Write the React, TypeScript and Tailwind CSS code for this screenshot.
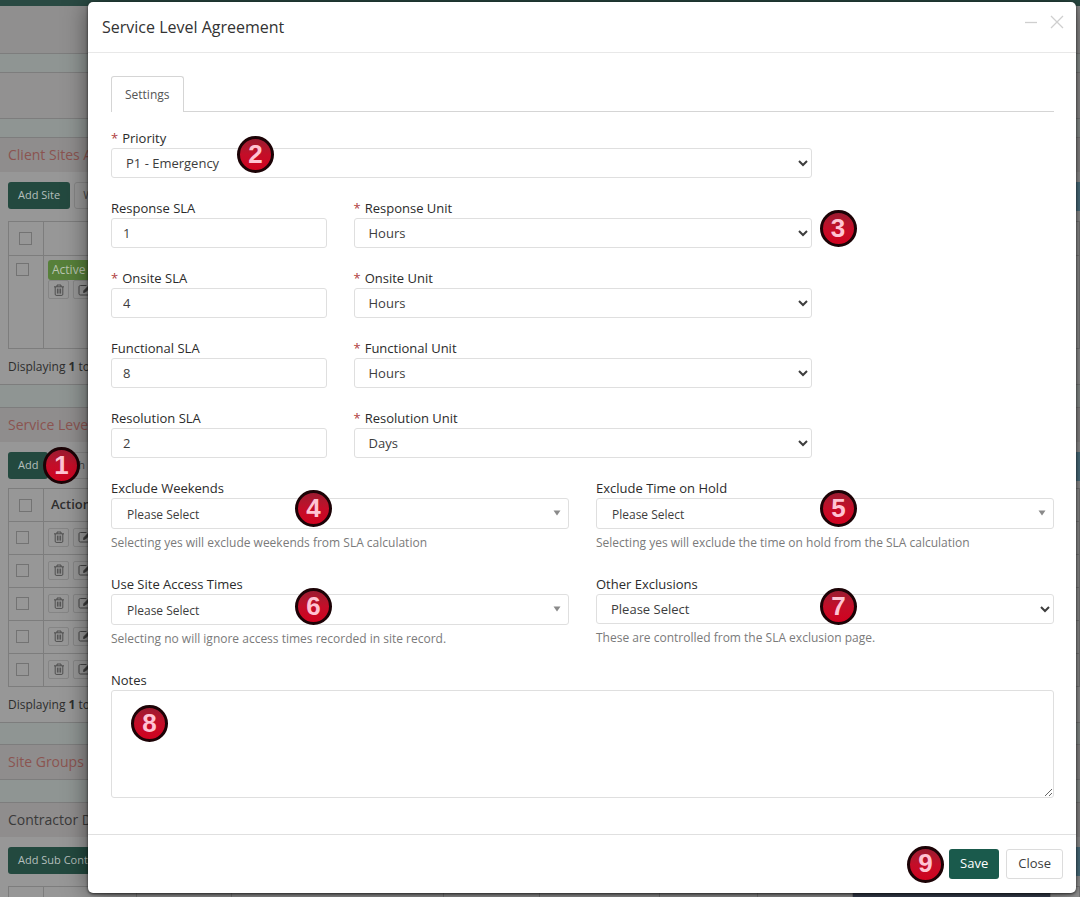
import type { ReactNode } from "react";
import clsx from "clsx";

const slaRows = [
  { name: "Response", value: "1", unit: "Hours", required: false, marker: 3 },
  { name: "Onsite", value: "4", unit: "Hours", required: true },
  { name: "Functional", value: "8", unit: "Hours", required: false },
  { name: "Resolution", value: "2", unit: "Days", required: false },
];

const control = "block w-full rounded-[3px] border border-[#dfdfdf] bg-white text-[#3d3d3d]";

function Marker({ n, className }: { n: number; className?: string }) {
  return (
    <span
      className={clsx(
        "flex h-[37px] w-[37px] items-center justify-center rounded-full border-[3px] border-[#1c0306] bg-gradient-to-b from-[#9c1a30] via-[#c40d28] to-[#d0021f] pb-0.5 font-['Liberation_Sans',sans-serif] text-[26px] leading-none font-bold text-[#ffc4d3]",
        className
      )}
    >
      {n}
    </span>
  );
}

function Label({
  htmlFor,
  required,
  children,
}: {
  htmlFor: string;
  required?: boolean;
  children: ReactNode;
}) {
  return (
    <label htmlFor={htmlFor} className="block h-5 text-[13px] leading-5 text-[#2b2b2b]">
      {required && <span className="mr-1 text-[#b0413e]">*</span>}
      {children}
    </label>
  );
}

function Select({ id, value }: { id: string; value: string }) {
  return (
    <select
      id={id}
      defaultValue={value}
      className={clsx(control, "h-[30px] pr-2 pl-2.5 text-[13px]")}
    >
      <option>{value}</option>
    </select>
  );
}

function SearchSelect({ id }: { id: string }) {
  return (
    <div className="relative">
      <select
        id={id}
        defaultValue="Please Select"
        className={clsx(control, "h-[31px] appearance-none px-[15px] pt-0.5 text-xs")}
      >
        <option>Please Select</option>
        <option>Yes</option>
        <option>No</option>
      </select>
      <svg
        viewBox="0 0 8 6"
        className="pointer-events-none absolute top-3 right-2 h-1.5 w-2 text-[#8a8a8a]"
        fill="currentColor"
      >
        <path d="M0.5 0.5h7L4 5.5z" />
      </svg>
    </div>
  );
}

function Hint({ children }: { children: ReactNode }) {
  return <p className="mt-1 text-xs leading-5 text-[#7a7a7a]">{children}</p>;
}

/* ---------- page behind the dialog ---------- */

function TrashIcon() {
  return (
    <svg
      viewBox="0 0 12 12"
      className="h-3 w-3 text-[#3c3c3c]"
      fill="none"
      stroke="currentColor"
      strokeWidth="0.8"
    >
      <path d="M1 2.8h10M4 2.6V1h4v1.6M2.2 3v7.2c0 .8.4 1.2 1 1.2h5.6c.6 0 1-.4 1-1.2V3M4.4 4.6v5M6 4.6v5M7.6 4.6v5" />
    </svg>
  );
}

function EditIcon() {
  return (
    <svg
      viewBox="0 0 14 12"
      className="h-3 w-3.5 shrink-0 text-[#3c3c3c]"
      fill="none"
      stroke="currentColor"
      strokeWidth="0.9"
    >
      <path d="M8.5 1.5H2.5c-1 0-1.5.5-1.5 1.5v6.5c0 1 .5 1.5 1.5 1.5h7c1 0 1.5-.5 1.5-1.5V7.5" />
      <path d="M5.5 8.5l.5-2L11.5 1l1.5 1.500L7.500 8z" fill="currentColor" />
    </svg>
  );
}

function RowActions() {
  return (
    <div className="flex gap-1">
      <button
        aria-label="Delete"
        className="flex h-[19px] w-[21px] items-center justify-center rounded-xs border border-[#858585]"
      >
        <TrashIcon />
      </button>
      <button
        aria-label="Edit"
        className="flex h-[19px] w-6 items-center justify-center rounded-xs border border-[#858585]"
      >
        <EditIcon />
      </button>
    </div>
  );
}

function Check({ label }: { label: string }) {
  return (
    <input
      type="checkbox"
      aria-label={label}
      className="block h-[13px] w-[13px] appearance-none border border-[#737373]"
    />
  );
}

function PanelTitle({ muted, children }: { muted?: boolean; children: ReactNode }) {
  return (
    <h2
      className={clsx(
        "h-[35px] border-t border-[#7d7d7d] bg-[#8f8d8d] px-2 text-sm leading-[34px]",
        muted ? "text-[#3a3a3a]" : "text-[#8b5450]"
      )}
    >
      {children}
    </h2>
  );
}

function Toolbar({ action, other }: { action: string; other?: string }) {
  return (
    <div className="flex h-[39px] items-start gap-1 pt-2.5 pl-2">
      <button className="h-[27px] rounded-[3px] bg-[#23493f] px-2.5 text-[11px] text-[#b4bfbc]">
        {action}
      </button>
      {other && (
        <button className="h-[27px] rounded-[3px] border border-[#858585] px-2 text-[11px] text-[#444]">
          {other}
        </button>
      )}
      <span className="ml-auto h-[29px] w-10 bg-[#4f7686]" />
    </div>
  );
}

function Displaying() {
  return (
    <p className="h-9 border-b border-[#7d7d7d] px-2 text-xs leading-9 text-[#2e2e2e]">
      Displaying <b>1</b> to
    </p>
  );
}

const cell = "border border-[#7d7d7d]";
const band = "bg-[#8f9593]";

function BackgroundPage() {
  return (
    <div className="bg-[#979797]">
      <div className="h-1.5 bg-[#2a4a43]" />
      <div className="h-12 border-b border-[#7d7d7d] bg-[#908f8f]" />
      <div className={clsx(band, "h-[19px] border-b border-[#7d7d7d]")} />
      <div className="h-[46px] border-b border-[#7d7d7d] bg-[#929191]" />
      <div className={clsx(band, "h-[18px]")} />

      <section>
        <PanelTitle>Client Sites A</PanelTitle>
        <Toolbar action="Add Site" other="With" />
        <div className="pt-2.5 pl-2">
          <table className="w-full table-fixed border-collapse">
            <tbody>
              <tr className="h-[34px]">
                <td className={clsx(cell, "w-[35px] pl-2.5")}>
                  <Check label="Select all sites" />
                </td>
                <td className={cell} />
              </tr>
              <tr className="h-[93px] align-top">
                <td className={clsx(cell, "pt-[7px] pl-[7px]")}>
                  <Check label="Select site" />
                </td>
                <td className={clsx(cell, "pt-1 pl-1")}>
                  <span className="block h-5 w-16 rounded-[3px] bg-[#57803a] px-1 text-xs leading-5 text-[#b9c4b0]">
                    Active
                  </span>
                  <RowActions />
                </td>
              </tr>
            </tbody>
          </table>
        </div>
        <Displaying />
      </section>

      <div className={clsx(band, "h-[22px]")} />

      <section>
        <PanelTitle>Service Level</PanelTitle>
        <div className="relative">
          <Toolbar action="Add" other="With" />
          <Marker n={1} className="absolute top-[5px] left-[43px]" />
        </div>
        <div className="pt-[7px] pl-2">
          <table className="w-full table-fixed border-collapse">
            <thead>
              <tr className="h-[33px]">
                <th className={clsx(cell, "w-[35px] pl-2.5")}>
                  <Check label="Select all agreements" />
                </th>
                <th className={clsx(cell, "pl-[7px] text-left text-[13px] font-semibold text-[#2e2e2e]")}>
                  Action
                </th>
              </tr>
            </thead>
            <tbody>
              {[1, 2, 3, 4, 5].map((row) => (
                <tr key={row} className="h-[33px]">
                  <td className={clsx(cell, "pb-0.5 pl-[7px]")}>
                    <Check label={`Select agreement ${row}`} />
                  </td>
                  <td className={clsx(cell, "pb-0.5 pl-1")}>
                    <RowActions />
                  </td>
                </tr>
              ))}
            </tbody>
          </table>
        </div>
        <Displaying />
      </section>

      <div className={clsx(band, "h-[21px]")} />
      <PanelTitle>Site Groups</PanelTitle>
      <div className={clsx(band, "h-[23px] border-t border-[#7d7d7d]")} />

      <section>
        <PanelTitle muted>Contractor D</PanelTitle>
        <Toolbar action="Add Sub Contr" />
        <div className="pt-2.5 pl-2">
          <table className="w-full table-fixed border-collapse">
            <tbody>
              <tr className="h-[34px]">
                <td className={clsx(cell, "w-[35px] pl-2.5")}>
                  <Check label="Select all contractors" />
                </td>
                <td className={clsx(cell, "w-[93px]")} />
                <td className={clsx(cell, "w-[95px]")} />
                <td className={clsx(cell, "w-[212px]")} />
                <td className={clsx(cell, "w-24")} />
                <td className={clsx(cell, "w-[120px]")} />
                <td className={clsx(cell, "w-[98px]")} />
                <td className={clsx(cell, "w-[95px]")} />
                <td className={clsx(cell, "w-[198px] bg-[#3a4252]")} />
                <td className={cell} />
              </tr>
            </tbody>
          </table>
        </div>
      </section>
    </div>
  );
}

/* ---------- dialog ---------- */

export default function App() {
  return (
    <div className="relative h-screen overflow-hidden font-['Open_Sans',sans-serif]">
      <BackgroundPage />

      <div className="absolute inset-0 pt-0.5 pr-1 pl-[88px]">
        <div
          role="dialog"
          aria-labelledby="dialog-title"
          className="rounded-[5px] bg-white shadow-[0_1px_24px_rgba(0,0,0,0.5),0_1px_3px_rgba(0,0,0,0.7)]"
        >
          <header className="flex h-[51px] items-start justify-between border-b border-[#e8e8e8] pr-3 pl-3.5">
            <h1 id="dialog-title" className="text-base leading-[50px] text-[#333]">
              Service Level Agreement
            </h1>
            <div className="flex gap-3 pt-[13px] text-[#cfcfcf]">
              <button aria-label="Minimize">
                <svg viewBox="0 0 14 14" className="h-3.5 w-3.5" stroke="currentColor" fill="none">
                  <path d="M1 7.500h12" strokeWidth="1.3" />
                </svg>
              </button>
              <button aria-label="Close dialog">
                <svg viewBox="0 0 14 14" className="h-3.5 w-3.5" stroke="currentColor" fill="none">
                  <path d="M1 1l12 12M13 1L1 13" strokeWidth="1.3" />
                </svg>
              </button>
            </div>
          </header>

          <form className="pt-[23px] pr-[22px] pb-9 pl-[23px]">
            <div className="flex border-b border-[#d5d5d5]">
              <button
                type="button"
                className="-mb-px h-9 rounded-t-[3px] border border-b-0 border-[#d5d5d5] bg-white px-[13px] text-xs text-[#555]"
              >
                Settings
              </button>
            </div>

            <div className="mt-4 grid grid-cols-4 gap-x-[27px] gap-y-5">
              <div className="relative col-span-3">
                <Label htmlFor="priority" required>
                  Priority
                </Label>
                <Select id="priority" value="P1 - Emergency" />
                <Marker n={2} className="absolute top-2 left-[126px]" />
              </div>

              {slaRows.map((row) => (
                <div key={row.name} className="col-span-4 grid grid-cols-4 gap-x-[27px]">
                  <div>
                    <Label htmlFor={`${row.name}-sla`} required={row.required}>
                      {row.name} SLA
                    </Label>
                    <input
                      id={`${row.name}-sla`}
                      type="text"
                      defaultValue={row.value}
                      className={clsx(control, "h-[30px] px-[11px] text-[13px]")}
                    />
                  </div>
                  <div className="relative col-span-2">
                    <Label htmlFor={`${row.name}-unit`} required>
                      {row.name} Unit
                    </Label>
                    <Select id={`${row.name}-unit`} value={row.unit} />
                    {row.marker && (
                      <Marker n={row.marker} className="absolute top-3 left-full ml-2" />
                    )}
                  </div>
                </div>
              ))}
            </div>

            <div className="mt-5 grid grid-cols-2 gap-x-[27px] gap-y-[21px]">
              <div className="relative">
                <Label htmlFor="weekends">Exclude Weekends</Label>
                <SearchSelect id="weekends" />
                <Hint>Selecting yes will exclude weekends from SLA calculation</Hint>
                <Marker n={4} className="absolute top-3 left-[184px]" />
              </div>
              <div className="relative">
                <Label htmlFor="hold">Exclude Time on Hold</Label>
                <SearchSelect id="hold" />
                <Hint>Selecting yes will exclude the time on hold from the SLA calculation</Hint>
                <Marker n={5} className="absolute top-3 left-56" />
              </div>
              <div className="relative">
                <Label htmlFor="access">Use Site Access Times</Label>
                <SearchSelect id="access" />
                <Hint>Selecting no will ignore access times recorded in site record.</Hint>
                <Marker n={6} className="absolute top-3.5 left-[184px]" />
              </div>
              <div className="relative">
                <Label htmlFor="other">Other Exclusions</Label>
                <Select id="other" value="Please Select" />
                <Hint>These are controlled from the SLA exclusion page.</Hint>
                <Marker n={7} className="absolute top-3.5 left-56" />
              </div>
            </div>

            <div className="relative mt-[21px]">
              <Label htmlFor="notes">Notes</Label>
              <textarea
                id="notes"
                className={clsx(control, "h-[108px] resize px-3 py-1.5 text-[13px]")}
              />
              <Marker n={8} className="absolute top-[35px] left-5" />
            </div>
          </form>

          <footer className="flex h-[59px] items-center justify-end border-t border-[#e0e0e0] pr-[13px]">
            <Marker n={9} className="mr-[5px]" />
            <button className="mr-[7px] h-[30px] rounded-[3px] bg-[#1a5a4c] px-[11px] text-[13px] text-white">
              Save
            </button>
            <button className="h-[30px] rounded-[3px] border border-[#dcdcdc] bg-white px-[11px] text-[13px] text-[#3d3d3d]">
              Close
            </button>
          </footer>
        </div>
      </div>
    </div>
  );
}
